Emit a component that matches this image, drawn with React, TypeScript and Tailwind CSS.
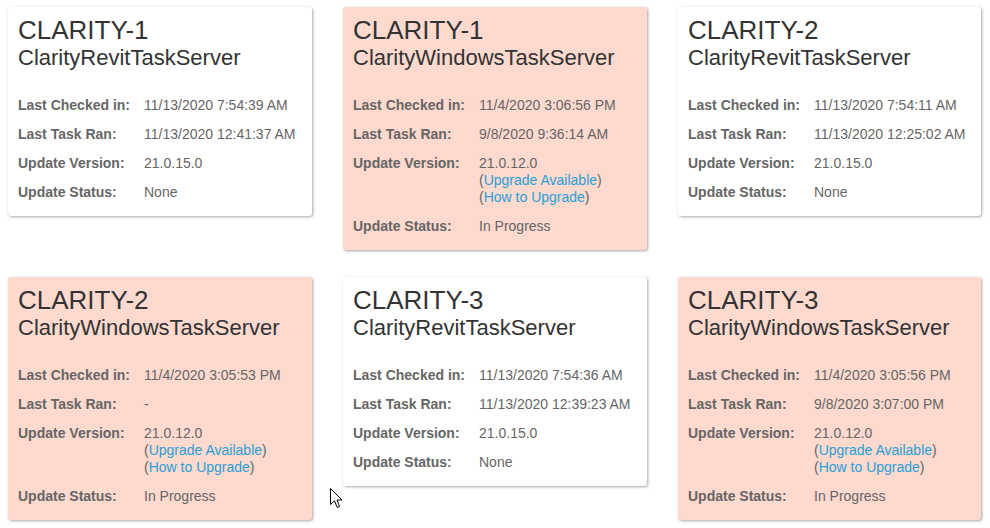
type Server = {
  host: string;
  name: string;
  checked: string;
  ran: string;
  version: string;
  status: string;
  upgrade?: boolean;
};

const servers: Server[] = [
  { host: "CLARITY-1", name: "ClarityRevitTaskServer", checked: "11/13/2020 7:54:39 AM", ran: "11/13/2020 12:41:37 AM", version: "21.0.15.0", status: "None" },
  { host: "CLARITY-1", name: "ClarityWindowsTaskServer", checked: "11/4/2020 3:06:56 PM", ran: "9/8/2020 9:36:14 AM", version: "21.0.12.0", status: "In Progress", upgrade: true },
  { host: "CLARITY-2", name: "ClarityRevitTaskServer", checked: "11/13/2020 7:54:11 AM", ran: "11/13/2020 12:25:02 AM", version: "21.0.15.0", status: "None" },
  { host: "CLARITY-2", name: "ClarityWindowsTaskServer", checked: "11/4/2020 3:05:53 PM", ran: "-", version: "21.0.12.0", status: "In Progress", upgrade: true },
  { host: "CLARITY-3", name: "ClarityRevitTaskServer", checked: "11/13/2020 7:54:36 AM", ran: "11/13/2020 12:39:23 AM", version: "21.0.15.0", status: "None" },
  { host: "CLARITY-3", name: "ClarityWindowsTaskServer", checked: "11/4/2020 3:05:56 PM", ran: "9/8/2020 3:07:00 PM", version: "21.0.12.0", status: "In Progress", upgrade: true },
];

function Row({ label, children }: { label: string; children: React.ReactNode }) {
  return (
    <div className="flex text-[14px] leading-[17px] text-[#666]">
      <div className="w-[126px] shrink-0 font-bold">{label}</div>
      <div>{children}</div>
    </div>
  );
}

function ServerCard({ s }: { s: Server }) {
  return (
    <div
      className={
        "rounded-[3px] pl-[10px] pr-[10px] pt-[8px] pb-[15px] shadow-[1px_1px_3px_rgba(0,0,0,0.35)] " +
        (s.upgrade ? "bg-[#fdd9ce]" : "bg-white")
      }
    >
      <div className="text-[26px] leading-[30px] text-[#333]">{s.host}</div>
      <div className="text-[22px] leading-[25px] text-[#333]">{s.name}</div>
      <div className="mt-[27px] flex flex-col gap-[12px]">
        <Row label="Last Checked in:">{s.checked}</Row>
        <Row label="Last Task Ran:">{s.ran}</Row>
        <Row label="Update Version:">
          <div>{s.version}</div>
          {s.upgrade && (
            <>
              <div>
                (<a className="text-[#2a9fd6]">Upgrade Available</a>)
              </div>
              <div>
                (<a className="text-[#2a9fd6]">How to Upgrade</a>)
              </div>
            </>
          )}
        </Row>
        <Row label="Update Status:">{s.status}</Row>
      </div>
    </div>
  );
}

export default function App() {
  return (
    <div className="relative h-[528px] w-[990px] overflow-hidden bg-white font-['Liberation_Sans',Arial,sans-serif]">
      <div className="grid grid-cols-[304px_304px_303px] items-start gap-x-[31px] gap-y-[27px] pl-[8px] pt-[7px]">
        {servers.map((s, i) => (
          <ServerCard key={i} s={s} />
        ))}
      </div>
      <svg className="absolute left-[330px] top-[488px]" width="13" height="21" viewBox="0 0 13 21">
        <path d="M0.5 0.5 L0.5 16.5 L4.5 12.8 L7.2 19.5 L9.6 18.5 L7 12 L12 12 Z" fill="#fff" stroke="#000" strokeWidth="1" strokeLinejoin="miter" />
      </svg>
    </div>
  );
}
